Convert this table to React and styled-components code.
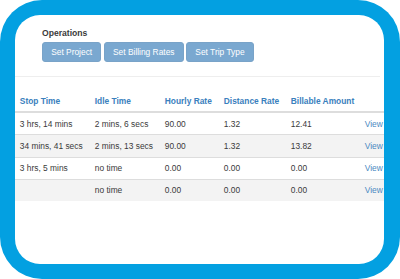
import React from "react";
import styled, { createGlobalStyle } from "styled-components";

const Global = createGlobalStyle`
  html, body { margin: 0; padding: 0; background: #ffffff; }
  body { font-family: "Liberation Sans", Arial, sans-serif; }
  * { box-sizing: border-box; }
`;

const Frame = styled.div`
  width: 400px;
  height: 279px;
  background: #03a0e1;
  border-radius: 42px;
  padding: 15px 16px 15px 15px;
  display: flex;
`;

const Screen = styled.div`
  flex: 1;
  background: #ffffff;
  border-radius: 25px;
  overflow: hidden;
  display: flex;
  flex-direction: column;
`;

const OpsPanel = styled.div`
  margin-right: 4px;
  padding: 12px 0 14px 27px;
  border-bottom: 1px solid #eeeeee;
`;

const Label = styled.div`
  font-size: 8.6px;
  line-height: 12px;
  font-weight: bold;
  color: #3a3a3a;
  margin-bottom: 3px;
`;

const ButtonRow = styled.div`
  display: flex;
  gap: 2.5px;
`;

const OpButton = styled.button`
  height: 20px;
  padding: 0 8.2px;
  border: 1px solid #79a3c8;
  border-radius: 3px;
  background: #7aa8d0;
  color: #ffffff;
  font-family: "Liberation Sans", Arial, sans-serif;
  font-size: 8.4px;
  line-height: 12px;
  cursor: default;
`;

const Table = styled.table`
  margin-top: 13px;
  width: 385px;
  table-layout: fixed;
  border-collapse: collapse;
  font-size: 8.4px;
  line-height: 12px;
  color: #3a3a3a;
`;

const HeadCell = styled.th`
  width: ${(p) => p.$w}px;
  text-align: left;
  font-weight: bold;
  color: #3a80bd;
  padding: 4.6px 4.8px;
  border-bottom: 2px solid #dddddd;
  white-space: nowrap;
`;

const Row = styled.tr`
  background: ${(p) => (p.$striped ? "#f3f3f3" : "#ffffff")};
`;

const Cell = styled.td`
  padding: 4.6px 4.8px;
  border-top: 1px solid #dddddd;
  white-space: nowrap;
  overflow: hidden;
`;

const ViewLink = styled.a`
  color: #4a88c2;
  text-decoration: none;
`;

const columns = [
  { key: "stop", title: "Stop Time", w: 75 },
  { key: "idle", title: "Idle Time", w: 70 },
  { key: "hourly", title: "Hourly Rate", w: 59 },
  { key: "dist", title: "Distance Rate", w: 67 },
  { key: "bill", title: "Billable Amount", w: 74 },
  { key: "view", title: "", w: 40 },
];

const rows = [
  { stop: "3 hrs, 14 mins", idle: "2 mins, 6 secs", hourly: "90.00", dist: "1.32", bill: "12.41" },
  { stop: "34 mins, 41 secs", idle: "2 mins, 13 secs", hourly: "90.00", dist: "1.32", bill: "13.82" },
  { stop: "3 hrs, 5 mins", idle: "no time", hourly: "0.00", dist: "0.00", bill: "0.00" },
  { stop: "", idle: "no time", hourly: "0.00", dist: "0.00", bill: "0.00" },
];

export default function App() {
  return (
    <>
      <Global />
      <Frame>
        <Screen>
          <OpsPanel>
            <Label>Operations</Label>
            <ButtonRow>
              <OpButton>Set Project</OpButton>
              <OpButton>Set Billing Rates</OpButton>
              <OpButton>Set Trip Type</OpButton>
            </ButtonRow>
          </OpsPanel>
          <Table>
            <thead>
              <tr>
                {columns.map((c) => (
                  <HeadCell key={c.key} $w={c.w}>
                    {c.title}
                  </HeadCell>
                ))}
              </tr>
            </thead>
            <tbody>
              {rows.map((r, i) => (
                <Row key={i} $striped={i % 2 === 1}>
                  <Cell>{r.stop}</Cell>
                  <Cell>{r.idle}</Cell>
                  <Cell>{r.hourly}</Cell>
                  <Cell>{r.dist}</Cell>
                  <Cell>{r.bill}</Cell>
                  <Cell>
                    <ViewLink href="#">View</ViewLink>
                  </Cell>
                </Row>
              ))}
            </tbody>
          </Table>
        </Screen>
      </Frame>
    </>
  );
}
